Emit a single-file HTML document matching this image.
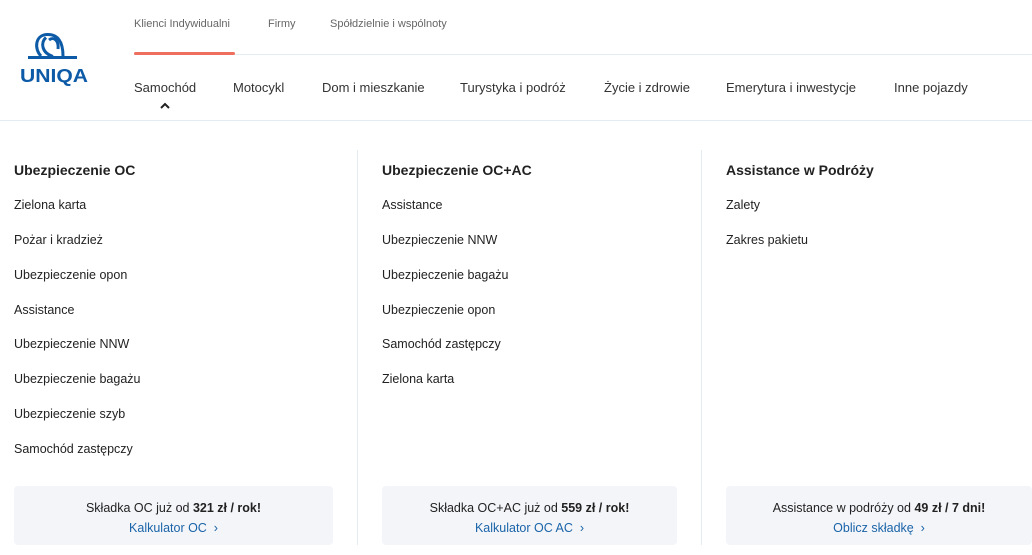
<!DOCTYPE html>
<html><head><meta charset="utf-8"><style>
*{margin:0;padding:0;box-sizing:border-box}
body{width:1032px;height:555px;background:#fff;font-family:"Liberation Sans",sans-serif;color:#222;position:relative;overflow:hidden}
.a{position:absolute;white-space:nowrap}
.top{font-size:11px;color:#666;top:18px}
.nav{font-size:13px;color:#333;top:80px}
.h{font-size:14px;font-weight:bold;top:162px;color:#222}
.i{font-size:12.5px;color:#222}
.box{position:absolute;top:486px;height:59px;background:#f4f5f9;border-radius:4px;text-align:center;font-size:12.5px;padding-top:12px;line-height:20px}
.box a{color:#1a64a8;text-decoration:none}
.vl{position:absolute;top:150px;width:1px;height:395px;background:#e3ebf3}
</style></head><body>
<svg class="a" style="left:0;top:0" width="110" height="100" viewBox="0 0 110 100">
<g fill="none" stroke="#0d5aa7" stroke-width="3">
<path d="M41 56 C34 49 35 35 47 34.5 C58 34 63 42 63 56"/>
<path d="M46 37.5 C40 43 42 53 53 56.5"/>
<path d="M49 40 C54 36 59 41 58 49"/>
</g>
<rect x="28" y="56" width="49" height="3" fill="#0d5aa7"/>
<text x="20" y="82" textLength="68" lengthAdjust="spacingAndGlyphs" font-family="Liberation Sans" font-weight="bold" font-size="18" fill="#0d5aa7">UNIQA</text>
</svg>
<div class="a top" style="left:134px">Klienci Indywidualni</div>
<div class="a top" style="left:268px">Firmy</div>
<div class="a top" style="left:330px">Spółdzielnie i wspólnoty</div>
<div class="a" style="left:134px;top:54px;width:898px;height:1px;background:#e3ebf3"></div>
<div class="a" style="left:134px;top:52px;width:101px;height:3px;background:#ef6f5e;border-radius:2px"></div>
<div class="a nav" style="left:134px">Samochód</div>
<div class="a nav" style="left:233px">Motocykl</div>
<div class="a nav" style="left:322px">Dom i mieszkanie</div>
<div class="a nav" style="left:460px">Turystyka i podróż</div>
<div class="a nav" style="left:604px">Życie i zdrowie</div>
<div class="a nav" style="left:726px">Emerytura i inwestycje</div>
<div class="a nav" style="left:894px">Inne pojazdy</div>
<svg class="a" style="left:160px;top:102px" width="10" height="7"><path d="M1 6L5 2L9 6" fill="none" stroke="#222" stroke-width="2"/></svg>
<div class="a" style="left:0;top:120px;width:1032px;height:1px;background:#e3ebf3"></div>
<div class="vl" style="left:357px"></div><div class="vl" style="left:701px"></div>
<div class="a h" style="left:14px">Ubezpieczenie OC</div>
<div class="a h" style="left:382px">Ubezpieczenie OC+AC</div>
<div class="a h" style="left:726px">Assistance w Podróży</div>
<div class="a i" style="left:14px;top:198px">Zielona karta</div>
<div class="a i" style="left:14px;top:233px">Pożar i kradzież</div>
<div class="a i" style="left:14px;top:268px">Ubezpieczenie opon</div>
<div class="a i" style="left:14px;top:303px">Assistance</div>
<div class="a i" style="left:14px;top:337px">Ubezpieczenie NNW</div>
<div class="a i" style="left:14px;top:372px">Ubezpieczenie bagażu</div>
<div class="a i" style="left:14px;top:407px">Ubezpieczenie szyb</div>
<div class="a i" style="left:14px;top:442px">Samochód zastępczy</div>
<div class="a i" style="left:382px;top:198px">Assistance</div>
<div class="a i" style="left:382px;top:233px">Ubezpieczenie NNW</div>
<div class="a i" style="left:382px;top:268px">Ubezpieczenie bagażu</div>
<div class="a i" style="left:382px;top:303px">Ubezpieczenie opon</div>
<div class="a i" style="left:382px;top:337px">Samochód zastępczy</div>
<div class="a i" style="left:382px;top:372px">Zielona karta</div>
<div class="a i" style="left:726px;top:198px">Zalety</div>
<div class="a i" style="left:726px;top:233px">Zakres pakietu</div>
<div class="box" style="left:14px;width:319px">Składka OC już od <b>321 zł / rok!</b><br><a>Kalkulator OC &nbsp;›</a></div>
<div class="box" style="left:382px;width:295px">Składka OC+AC już od <b>559 zł / rok!</b><br><a>Kalkulator OC AC &nbsp;›</a></div>
<div class="box" style="left:726px;width:306px">Assistance w podróży od <b>49 zł / 7 dni!</b><br><a>Oblicz składkę &nbsp;›</a></div>
</body></html>
